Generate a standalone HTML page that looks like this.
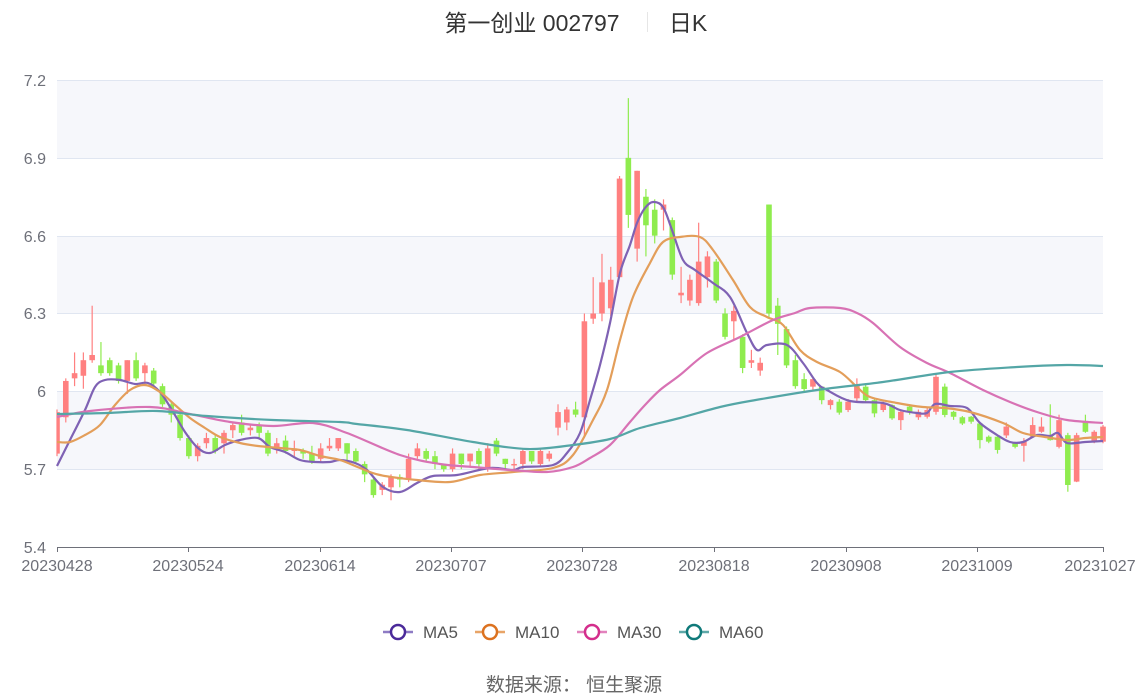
<!DOCTYPE html>
<html><head><meta charset="utf-8"><style>
body{margin:0;width:1148px;height:699px;background:#fff;overflow:hidden;font-family:"Liberation Sans","Noto Sans CJK SC",sans-serif}
</style></head><body>
<svg id="s" width="1148" height="699" xmlns="http://www.w3.org/2000/svg" style="position:absolute;left:0;top:0">
<rect x="57" y="80" width="1046" height="78" fill="#f6f7fb"/>
<rect x="57" y="236" width="1046" height="78" fill="#f6f7fb"/>
<rect x="57" y="391" width="1046" height="78" fill="#f6f7fb"/>
<g stroke="#e0e6f1" stroke-width="1">
<line x1="57" x2="1103" y1="80.5" y2="80.5"/><line x1="57" x2="1103" y1="158.5" y2="158.5"/>
<line x1="57" x2="1103" y1="236.5" y2="236.5"/><line x1="57" x2="1103" y1="313.5" y2="313.5"/>
<line x1="57" x2="1103" y1="391.5" y2="391.5"/><line x1="57" x2="1103" y1="469.5" y2="469.5"/>
</g>
<g fill="#6e7079" font-size="16" text-anchor="end">
<text x="46" y="86">7.2</text><text x="46" y="164">6.9</text><text x="46" y="242">6.6</text>
<text x="46" y="319">6.3</text><text x="46" y="397">6</text><text x="46" y="475">5.7</text><text x="46" y="553">5.4</text>
</g>
<g id="c"></g>
<g id="m" fill="none" stroke-width="2.2" stroke-linejoin="round"></g>
<line x1="57" x2="1103" y1="547.5" y2="547.5" stroke="#6e7079"/>
<g stroke="#6e7079" id="t"></g>
<g fill="#6e7079" font-size="16" text-anchor="middle">
<text x="57" y="571">20230428</text><text x="188" y="571">20230524</text><text x="320" y="571">20230614</text>
<text x="451" y="571">20230707</text><text x="582" y="571">20230728</text><text x="714" y="571">20230818</text>
<text x="846" y="571">20230908</text><text x="977" y="571">20231009</text><text x="1100" y="571">20231027</text>
</g>
<text x="532" y="31" font-size="23" fill="#333" text-anchor="middle">第一创业 002797</text>
<line x1="647.5" x2="647.5" y1="12" y2="32" stroke="#e6e6e6"/>
<text x="688" y="31" font-size="23" fill="#333" text-anchor="middle">日K</text>
<g font-size="17" fill="#555">
<line x1="383" x2="413" y1="632" y2="632" stroke="#8e7bc4" stroke-width="2.5"/><circle cx="398" cy="632" r="7" fill="#fff" stroke="#4b2a9a" stroke-width="2.5"/><text x="423" y="638">MA5</text>
<line x1="475" x2="505" y1="632" y2="632" stroke="#e8a467" stroke-width="2.5"/><circle cx="490" cy="632" r="7" fill="#fff" stroke="#dc7220" stroke-width="2.5"/><text x="515" y="638">MA10</text>
<line x1="577" x2="607" y1="632" y2="632" stroke="#e282bd" stroke-width="2.5"/><circle cx="592" cy="632" r="7" fill="#fff" stroke="#d42e8c" stroke-width="2.5"/><text x="617" y="638">MA30</text>
<line x1="679" x2="709" y1="632" y2="632" stroke="#5fa8a8" stroke-width="2.5"/><circle cx="694" cy="632" r="7" fill="#fff" stroke="#107a7a" stroke-width="2.5"/><text x="719" y="638">MA60</text>
</g>
<text x="574" y="691" font-size="19" fill="#666" text-anchor="middle">数据来源：  恒生聚源</text>
</svg>
<script>
var K=[[5.76,5.92,5.93,5.75],[5.9,6.04,6.05,5.88],[6.05,6.07,6.15,6.02],[6.06,6.12,6.15,6.01],[6.12,6.14,6.33,6.11],[6.1,6.07,6.19,6.06],[6.12,6.07,6.13,6.06],[6.1,6.04,6.11,6.03],[6.04,6.12,6.12,5.99],[6.12,6.05,6.15,6.04],
[6.07,6.1,6.11,6.02],[6.08,6.03,6.09,6.02],[6.02,5.95,6.03,5.94],[5.95,5.91,5.96,5.88],[5.91,5.82,5.92,5.81],[5.82,5.75,5.83,5.74],[5.75,5.79,5.8,5.73],[5.8,5.82,5.84,5.78],[5.82,5.77,5.83,5.76],[5.8,5.84,5.85,5.76],
[5.85,5.87,5.88,5.82],[5.88,5.84,5.91,5.83],[5.85,5.86,5.87,5.83],[5.87,5.84,5.88,5.82],[5.84,5.76,5.85,5.75],[5.78,5.8,5.82,5.76],[5.81,5.77,5.83,5.76],[5.77,5.78,5.81,5.75],[5.77,5.76,5.78,5.74],[5.76,5.73,5.79,5.72],
[5.74,5.78,5.8,5.73],[5.78,5.79,5.82,5.77],[5.78,5.82,5.82,5.77],[5.8,5.76,5.8,5.73],[5.77,5.73,5.78,5.72],[5.72,5.68,5.73,5.65],[5.66,5.6,5.67,5.59],[5.62,5.64,5.65,5.6],[5.63,5.67,5.68,5.58],[5.67,5.66,5.68,5.63],
[5.66,5.74,5.76,5.65],[5.75,5.78,5.8,5.74],[5.77,5.74,5.78,5.73],[5.75,5.72,5.77,5.7],[5.72,5.7,5.72,5.69],[5.7,5.76,5.78,5.69],[5.76,5.72,5.76,5.7],[5.73,5.76,5.76,5.71],[5.77,5.72,5.78,5.7],[5.7,5.78,5.8,5.69],
[5.81,5.76,5.82,5.75],[5.74,5.72,5.74,5.7],[5.715,5.72,5.74,5.7],[5.72,5.77,5.78,5.7],[5.77,5.73,5.77,5.72],[5.72,5.77,5.78,5.71],[5.74,5.76,5.77,5.73],[5.86,5.92,5.95,5.83],[5.88,5.93,5.94,5.85],[5.93,5.91,5.96,5.9],
[5.9,6.27,6.3,5.82],[6.28,6.3,6.44,6.26],[6.3,6.42,6.53,6.27],[6.32,6.43,6.48,6.29],[6.44,6.82,6.83,6.44],[6.9,6.68,7.13,6.63],[6.55,6.85,6.85,6.5],[6.75,6.64,6.78,6.52],[6.7,6.6,6.74,6.57],[6.7,6.72,6.74,6.62],
[6.66,6.45,6.67,6.43],[6.37,6.38,6.48,6.34],[6.35,6.43,6.45,6.33],[6.34,6.5,6.65,6.33],[6.44,6.52,6.54,6.4],[6.5,6.35,6.51,6.34],[6.3,6.21,6.32,6.2],[6.27,6.31,6.33,6.2],[6.21,6.09,6.22,6.07],[6.11,6.12,6.16,6.09],
[6.08,6.11,6.13,6.06],[6.72,6.3,6.72,6.28],[6.33,6.26,6.36,6.14],[6.24,6.1,6.25,6.09],[6.12,6.02,6.14,6.01],[6.047,6.009,6.07,6.0],[6.018,6.047,6.05,6.0],[6.018,5.966,6.02,5.95],[5.947,5.966,5.97,5.93],[5.96,5.918,5.97,5.91],
[5.928,5.96,5.97,5.92],[5.973,6.024,6.05,5.96],[6.018,5.966,6.03,5.96],[5.966,5.915,5.97,5.9],[5.928,5.954,5.96,5.92],[5.947,5.896,5.95,5.89],[5.889,5.921,5.93,5.851],[5.941,5.921,5.95,5.91],[5.9,5.921,5.93,5.89],[5.902,5.928,5.935,5.895],
[5.921,6.056,6.065,5.91],[6.018,5.909,6.03,5.9],[5.921,5.902,5.925,5.89],[5.9,5.876,5.905,5.87],[5.902,5.883,5.905,5.875],[5.876,5.812,5.88,5.78],[5.825,5.806,5.83,5.8],[5.825,5.774,5.83,5.76],[5.83,5.864,5.88,5.82],[5.8,5.786,5.805,5.78],
[5.79,5.806,5.82,5.729],[5.825,5.87,5.9,5.82],[5.844,5.864,5.9,5.84],[5.831,5.812,5.95,5.81],[5.786,5.889,5.91,5.78],[5.831,5.639,5.84,5.613],[5.652,5.831,5.84,5.65],[5.883,5.844,5.91,5.84],[5.806,5.844,5.85,5.8],[5.806,5.864,5.87,5.8]];
function Y(p){return 80+(7.2-p)*259.44}
var h='',st=1046/119;
for(var i=0;i<K.length;i++){var k=K[i],x=57+i*st,up=k[1]>=k[0],col=up?'#ff8080':'#8fec4e';
var t=Y(Math.max(k[0],k[1])),b=Y(Math.min(k[0],k[1]));if(b-t<1.5)b=t+1.5;
var l=Math.max(x-2.8,57);
h+='<line x1="'+x+'" x2="'+x+'" y1="'+Y(k[2])+'" y2="'+Y(k[3])+'" stroke="'+col+'" stroke-width="1.2"/>';
h+='<rect x="'+l+'" y="'+t+'" width="'+(x+2.8-l)+'" height="'+(b-t)+'" fill="'+col+'"/>';}
document.getElementById('c').innerHTML=h;
var M={'#7f62b4':[[57,466],[70,440],[85,410],[95,387],[105,380],[120,380],[135,384],[148,383],[160,392],[172,410],[185,432],[198,448],[210,453],[225,445],[240,440],[258,438],[270,447],[285,452],[300,460],[315,462],[330,462],[340,460],[355,463],[367,470],[383,487],[400,492],[417,483],[433,476],[457,475],[490,468],[513,470],[523,467],[553,465],[567,453],[580,433],[590,400],[600,365],[610,323],[620,273],[630,245],[637,223],[645,208],[653,202],[663,207],[672,230],[683,260],[695,270],[713,283],[730,297],[747,333],[757,350],[767,345],[787,345],[803,363],[817,383],[827,390],[850,401],[883,403],[900,410],[917,413],[927,413],[935,404],[950,406],[967,408],[980,423],[997,435],[1010,442],[1023,442],[1037,435],[1050,436],[1058,433],[1067,443],[1085,442],[1103,441]],
'#e39e5a':[[57,442],[70,442],[85,435],[100,425],[115,405],[130,390],[145,385],[160,392],[175,405],[190,418],[205,428],[220,437],[240,443],[258,446],[280,448],[300,450],[320,456],[340,460],[360,468],[380,475],[417,480],[450,482],[480,475],[513,472],[553,468],[573,455],[593,420],[607,390],[620,340],[633,297],[650,263],[663,242],[680,237],[700,237],[713,250],[733,280],[750,307],[767,317],[783,325],[800,350],[817,362],[840,372],[857,387],[870,397],[897,403],[923,407],[945,408],[970,412],[1003,423],[1023,433],[1045,437],[1067,440],[1085,438],[1103,437]],
'#d872b4':[[57,417],[90,411],[150,407],[190,414],[230,422],[273,426],[313,423],[347,433],[400,455],[440,464],[473,467],[510,470],[547,472],[573,467],[590,458],[610,445],[630,422],[645,405],[660,390],[680,375],[707,353],[740,337],[773,320],[795,313],[810,308],[840,308],[857,313],[873,323],[900,347],[927,363],[950,373],[983,390],[1010,402],[1037,412],[1067,420],[1103,423]],
'#54a6a6':[[57,414],[107,413],[157,411],[207,416],[273,420],[340,422],[357,424],[407,430],[473,442],[527,449],[573,445],[610,439],[640,428],[680,418],[720,407],[750,401],[817,390],[883,382],[950,372],[1017,367],[1067,365],[1103,366]]};
function sm(p){var d='M'+p[0][0]+','+p[0][1];for(var i=0;i<p.length-1;i++){var a=p[Math.max(i-1,0)],b=p[i],c=p[i+1],e=p[Math.min(i+2,p.length-1)];
var c1x=b[0]+(c[0]-a[0])/6,c1y=b[1]+(c[1]-a[1])/6,c2x=c[0]-(e[0]-b[0])/6,c2y=c[1]-(e[1]-b[1])/6;
d+=' C'+c1x.toFixed(1)+','+c1y.toFixed(1)+' '+c2x.toFixed(1)+','+c2y.toFixed(1)+' '+c[0]+','+c[1];}return d;}
var g='';for(var c in M){g+='<path stroke="'+c+'" d="'+sm(M[c])+'"/>';}
document.getElementById('m').innerHTML=g;
var tk='';[57,188,320,451,582,714,846,977,1103].forEach(function(x){tk+='<line x1="'+(x+.5)+'" x2="'+(x+.5)+'" y1="547" y2="552"/>'});
document.getElementById('t').innerHTML=tk;
</script>
</body></html>
